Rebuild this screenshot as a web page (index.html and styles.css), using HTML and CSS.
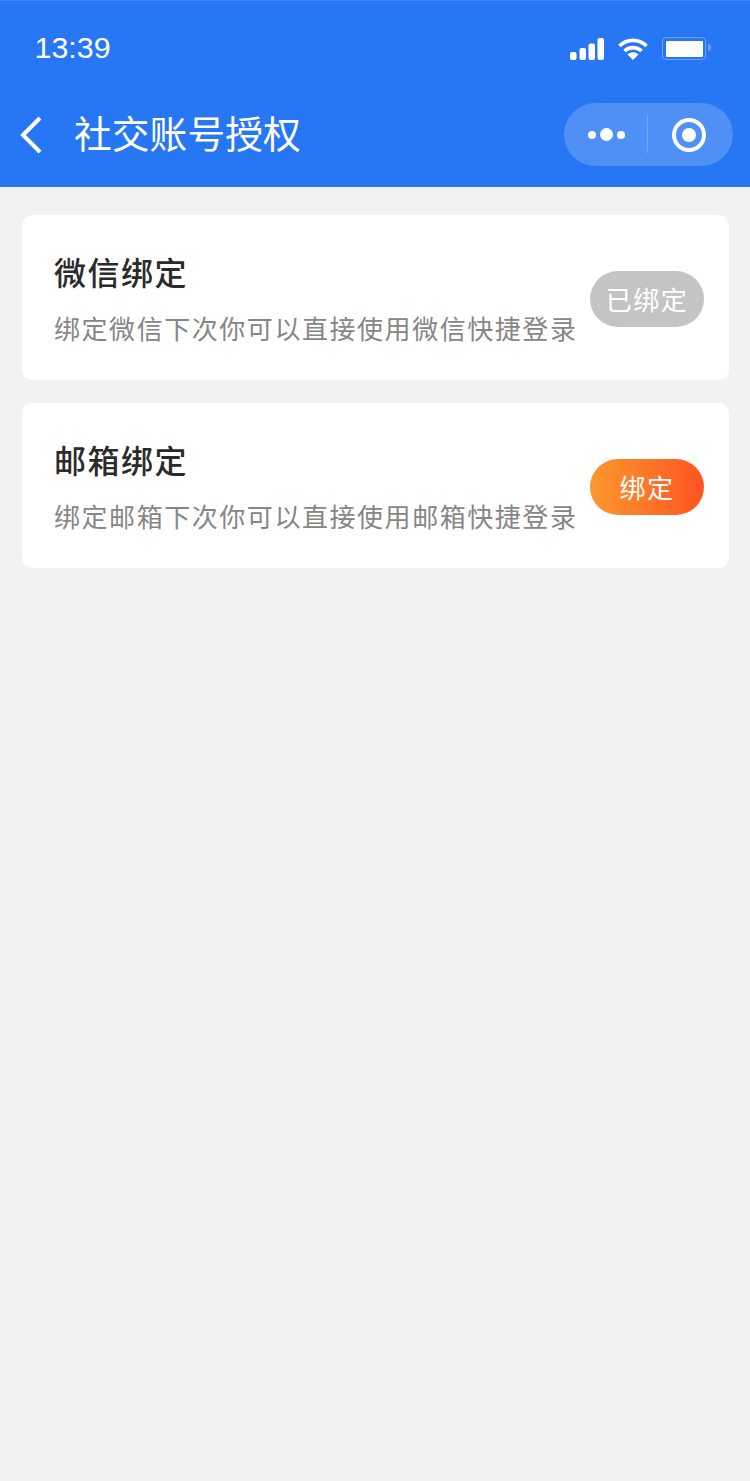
FILE: index.html
```html
<!DOCTYPE html>
<html lang="zh-CN">
<head>
<meta charset="utf-8">
<title>社交账号授权</title>
<link rel="stylesheet" href="styles.css">
</head>
<body>
<header class="header">
  <div class="status">
    <span class="time">13:39</span>
    <div class="status-icons">
      <svg class="signal" width="34" height="22" viewBox="0 0 34 22"><rect x="0" y="14" width="6.500" height="8" rx="2"/><rect x="9.500" y="10" width="6.500" height="12" rx="2"/><rect x="18.500" y="5.500" width="6.500" height="16.500" rx="2"/><rect x="27.500" y="0" width="6.500" height="22" rx="2"/></svg>
      <svg class="wifi" width="30" height="22" viewBox="0 0 30 22"><path class="arc" d="M1.500 8 C9 0.500 21 0.500 28.500 8"/><path class="arc" d="M6.500 13 C11 8.500 19 8.500 23.500 13"/><path class="wedge" d="M15 22 L9.500 16.500 C13 13.500 17 13.500 20.500 16.500 Z"/></svg>
      <div class="battery"><div class="battery-fill"></div><span class="battery-tip"></span></div>
    </div>
  </div>
  <div class="nav">
    <svg class="back" width="24" height="38" viewBox="0 0 24 38"><path d="M21 2 L4 19 L21 36"/></svg>
    <h1 class="nav-title">社交账号授权</h1>
    <div class="capsule">
      <div class="more"><i class="dot"></i><i class="dot dot-big"></i><i class="dot"></i></div>
      <span class="divider"></span>
      <div class="target"><i class="target-dot"></i></div>
    </div>
  </div>
</header>
<main class="list">
  <section class="card">
    <div class="info">
      <h2 class="card-title">微信绑定</h2>
      <p class="card-desc">绑定微信下次你可以直接使用微信快捷登录</p>
    </div>
    <span class="btn btn-done">已绑定</span>
  </section>
  <section class="card">
    <div class="info">
      <h2 class="card-title">邮箱绑定</h2>
      <p class="card-desc">绑定邮箱下次你可以直接使用邮箱快捷登录</p>
    </div>
    <span class="btn btn-bind">绑定</span>
  </section>
</main>
</body>
</html>
```
FILE: styles.css
```css
* { box-sizing: border-box; }
html, body { margin: 0; padding: 0; }
body {
  width: 750px;
  min-height: 1481px;
  background: #f2f2f2;
  font-family: "Liberation Sans", "Noto Sans CJK SC", sans-serif;
}
.header {
  height: 187px;
  background: #2777f4;
  border-top: 1px solid #3f87f7;
  color: #fff;
  display: flex;
  flex-direction: column;
}
.status {
  height: 87px;
  padding: 8px 39px 0 34.500px;
  display: flex;
  align-items: center;
  justify-content: space-between;
}
.time { font-size: 30.400px; line-height: 36px; margin-bottom: 4px; }
.status-icons { display: flex; align-items: center; gap: 14px; }
.signal rect { fill: #fff; }
.wifi .arc { fill: none; stroke: #fff; stroke-width: 3.800; }
.wifi .wedge { fill: #fff; }
.battery {
  position: relative;
  width: 44px;
  height: 23px;
  border: 1.500px solid #6aa2f8;
  border-radius: 4px;
  padding: 2.500px;
  margin-right: 5px;
}
.battery-fill { width: 100%; height: 100%; background: #fff; border-radius: 1px; }
.battery-tip {
  position: absolute;
  right: -6px;
  top: 6px;
  width: 3px;
  height: 7px;
  background: #6aa2f8;
  border-radius: 0 3px 3px 0;
}
.nav {
  flex: 1;
  display: flex;
  align-items: center;
  padding: 0 17px 6px 19px;
}
.back { flex: none; }
.back path { fill: none; stroke: #fff; stroke-width: 4; }
.nav-title {
  margin: 0 0 0 31px;
  font-size: 37.800px;
  line-height: 48px;
  font-weight: 400;
  flex: 1;
}
.capsule {
  width: 169px;
  height: 63px;
  border-radius: 32px;
  background: #4f90f7;
  display: flex;
  align-items: center;
}
.more {
  width: 83px;
  padding-left: 2px;
  display: flex;
  align-items: center;
  justify-content: center;
  gap: 4px;
}
.dot { width: 8px; height: 8px; border-radius: 50%; background: #fff; }
.dot-big { width: 13px; height: 13px; }
.divider { width: 1px; height: 37px; background: #75a8f9; }
.target {
  margin-left: 24px;
  width: 34px;
  height: 34px;
  border: 4px solid #fff;
  border-radius: 50%;
  display: flex;
  align-items: center;
  justify-content: center;
}
.target-dot { width: 14px; height: 14px; border-radius: 50%; background: #fff; }
.list {
  padding: 28px 21px 0 22px;
  display: flex;
  flex-direction: column;
  gap: 23px;
}
.card {
  height: 165px;
  background: #fff;
  border-radius: 10px;
  padding: 2px 25px 0 32px;
  display: flex;
  align-items: center;
  justify-content: space-between;
}
.info { display: flex; flex-direction: column; padding-top: 3px; }
.card-title {
  margin: 0;
  font-size: 32px;
  line-height: 44px;
  font-weight: 500;
  letter-spacing: 1.500px;
  color: #2b2b2b;
}
.card-desc {
  margin: 16px 0 0;
  font-size: 26px;
  line-height: 36px;
  letter-spacing: 1.550px;
  color: #868686;
}
.btn {
  width: 114px;
  height: 56px;
  border-radius: 28px;
  color: #fff;
  font-size: 26px;
  letter-spacing: 1.500px;
  display: flex;
  align-items: center;
  justify-content: center;
  flex: none;
}
.btn-done { background: #c4c4c4; }
.btn-bind { background: linear-gradient(90deg, #fb982d, #fe5522); }
```
